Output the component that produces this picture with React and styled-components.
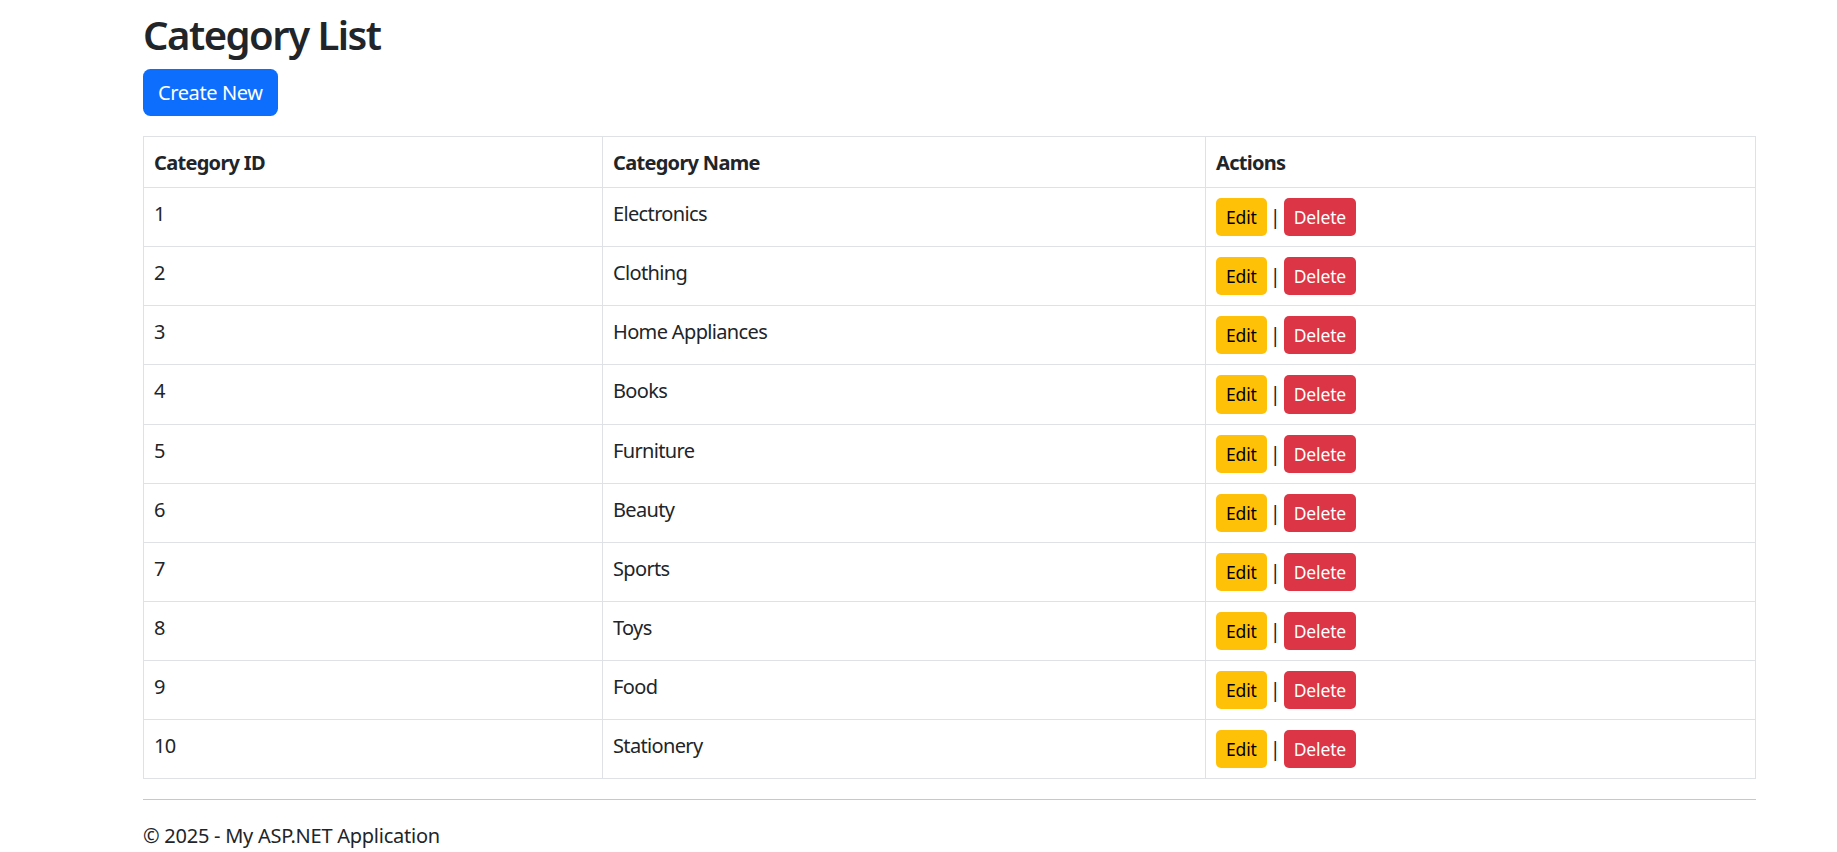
import React from 'react';
import styled, { createGlobalStyle } from 'styled-components';

const GlobalStyle = createGlobalStyle`
    body {
        margin: 0;
        background-color: #fff;
        color: #212529;
        font-family: "Noto Sans", "Open Sans", sans-serif;
        font-size: 20px;
        line-height: 1.5;
    }
`;

const Page = styled.div`
    width: 1613px;
    margin-left: 143px;
`;

const Title = styled.h2`
    margin: 11px 0 10px;
    font-size: 40px;
    font-weight: 600;
    line-height: 48px;
    letter-spacing: -1.5px;
`;

const Button = styled.button`
    display: inline-flex;
    align-items: center;
    justify-content: center;
    height: ${p => (p.small ? '38.15px' : '47px')};
    padding: 0 ${p => (p.small ? '10px' : '15px')};
    border: none;
    border-radius: ${p => (p.small ? '5px' : '7.5px')};
    font-family: inherit;
    font-size: ${p => (p.small ? '17.5px' : '20px')};
    letter-spacing: ${p => (p.small ? '-0.15px' : '-0.4px')};
    color: ${p => p.fg};
    background-color: ${p => p.bg};
    cursor: pointer;
`;

const Table = styled.table`
    width: 100%;
    margin: 20px 0;
    border-collapse: collapse;
    border: 1px solid #dee2e6;
    letter-spacing: -0.65px;

    th, td {
        padding: 11px 10px 9px;
        border: 1px solid #dee2e6;
        text-align: left;
        vertical-align: top;
    }

    td.actions {
        padding: 10px;
    }

    th {
        font-weight: 700;
        letter-spacing: -0.7px;
    }
`;

const Actions = styled.div`
    display: flex;
    align-items: center;
    letter-spacing: 0;
`;

const Separator = styled.span`
    display: inline-block;
    width: 17px;
    text-align: center;
    line-height: 20px;
`;

const Rule = styled.hr`
    margin: 0 0 20px;
    border: 0;
    border-top: 1px solid #212529;
    opacity: 0.25;
`;

const Footer = styled.footer`
    padding-top: 1px;
    letter-spacing: -0.25px;
`;

const categories = [
    'Electronics',
    'Clothing',
    'Home Appliances',
    'Books',
    'Furniture',
    'Beauty',
    'Sports',
    'Toys',
    'Food',
    'Stationery',
];

export default function App() {
    return (
        <Page>
            <GlobalStyle />
            <Title>Category List</Title>
            <Button bg="#0d6efd" fg="#fff">Create New</Button>

            <Table>
                <colgroup>
                    <col style={{ width: 459 }} />
                    <col style={{ width: 603 }} />
                    <col />
                </colgroup>
                <thead>
                    <tr>
                        <th>Category ID</th>
                        <th>Category Name</th>
                        <th>Actions</th>
                    </tr>
                </thead>
                <tbody>
                    {categories.map((name, i) => (
                        <tr key={name}>
                            <td>{i + 1}</td>
                            <td>{name}</td>
                            <td className="actions">
                                <Actions>
                                    <Button small bg="#ffc107" fg="#000">Edit</Button>
                                    <Separator>|</Separator>
                                    <Button small bg="#dc3545" fg="#fff">Delete</Button>
                                </Actions>
                            </td>
                        </tr>
                    ))}
                </tbody>
            </Table>

            <Rule />
            <Footer>© 2025 - My ASP.NET Application</Footer>
        </Page>
    );
}
